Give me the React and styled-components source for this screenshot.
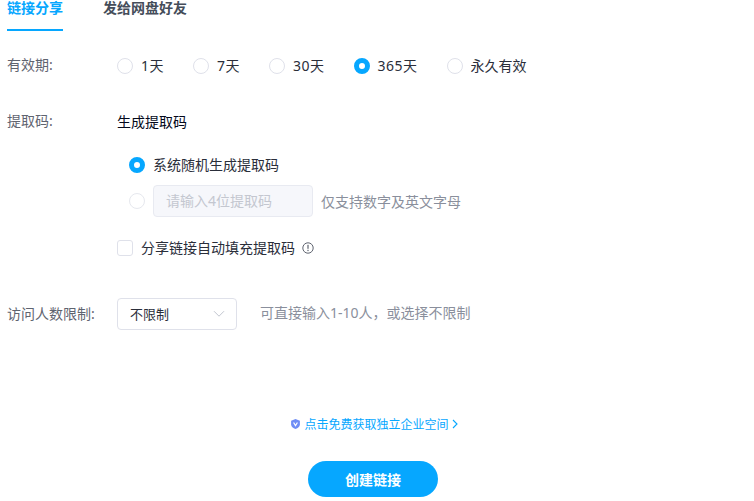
import React from 'react';
import styled, { createGlobalStyle } from 'styled-components';

const GlobalStyle = createGlobalStyle`
  html, body { margin: 0; padding: 0; background: #fff; }
  body { font-family: "Noto Sans", "Noto Sans CJK SC", sans-serif; }
`;

const durations = [
  { label: '1天', numeric: true },
  { label: '7天', numeric: true },
  { label: '30天', numeric: true },
  { label: '365天', numeric: true, checked: true },
  { label: '永久有效' },
];

const limitHint = '可直接输入1-10人\uFF0C或选择不限制';

function App() {
  return (
    <Page>
      <GlobalStyle />
      <Tabs>
        <Tab $active>链接分享</Tab>
        <Tab>发给网盘好友</Tab>
      </Tabs>

      <Row>
        <Label>有效期:</Label>
        <Options>
          {durations.map((d) => (
            <Option key={d.label}>
              <Radio $checked={d.checked} />
              <OptionText $numeric={d.numeric}>{d.label}</OptionText>
            </Option>
          ))}
        </Options>
      </Row>

      <CodeSection>
        <CodeHeader>
          <Label>提取码:</Label>
          <CodeTitle>生成提取码</CodeTitle>
        </CodeHeader>
        <CodeChoice>
          <Radio $checked />
          <OptionText>系统随机生成提取码</OptionText>
        </CodeChoice>
        <CodeInputRow>
          <Radio $disabled />
          <CodeInput>请输入4位提取码</CodeInput>
          <Hint>仅支持数字及英文字母</Hint>
        </CodeInputRow>
        <AutoFill>
          <Checkbox />
          <OptionText>分享链接自动填充提取码</OptionText>
          <InfoIcon viewBox="0 0 12 12">
            <circle cx="6" cy="6" r="5.2" fill="none" stroke="#5f6470" strokeWidth="1" />
            <rect x="5.4" y="2.8" width="1.2" height="4" fill="#5f6470" />
            <rect x="5.4" y="7.8" width="1.2" height="1.3" fill="#5f6470" />
          </InfoIcon>
        </AutoFill>
      </CodeSection>

      <LimitRow>
        <Label>访问人数限制:</Label>
        <Select>
          <SelectValue>不限制</SelectValue>
          <Chevron viewBox="0 0 12 8">
            <path d="M1 1.2 6 6.2 11 1.2" fill="none" stroke="#c2c6d0" strokeWidth="1" />
          </Chevron>
        </Select>
        <LimitHint>{limitHint}</LimitHint>
      </LimitRow>

      <Footer>
        <Promo>
          <ShieldIcon viewBox="0 0 12 12">
            <path d="M6 .6 10.8 2.4V6.2C10.8 8.8 8.6 10.6 6 11.5 3.4 10.6 1.2 8.8 1.2 6.2V2.4Z" fill="#6f8df5" />
            <path d="M3.9 4.3 6 7.8 8.1 4.3" fill="none" stroke="#fff" strokeWidth="1.3" />
          </ShieldIcon>
          <span>点击免费获取独立企业空间</span>
          <PromoArrow viewBox="0 0 6 10">
            <path d="M1 1 5 5 1 9" fill="none" stroke="#06a7ff" strokeWidth="1.1" />
          </PromoArrow>
        </Promo>
        <CreateButton>创建链接</CreateButton>
      </Footer>
    </Page>
  );
}

const Page = styled.div`
  width: 754px;
  height: 501px;
  overflow: hidden;
  padding: 0 7px;
  box-sizing: border-box;
  font-size: 14px;
  color: #03081a;
`;

const Tabs = styled.div`
  display: flex;
  gap: 40px;
  height: 31px;
`;

const Tab = styled.div`
  height: 31px;
  box-sizing: border-box;
  font-size: 14px;
  line-height: 15px;
  font-weight: 700;
  color: ${(p) => (p.$active ? '#06a7ff' : '#454d5a')};
  border-bottom: 2px solid ${(p) => (p.$active ? '#06a7ff' : 'transparent')};
`;

const Row = styled.div`
  display: flex;
  align-items: center;
  height: 20px;
  margin-top: 24px;
`;

const Label = styled.div`
  width: 110px;
  flex: none;
  font-size: 14px;
  line-height: 20px;
  color: #5f6470;
`;

const Options = styled.div`
  display: flex;
  align-items: center;
  gap: 29px;
  margin-top: 2px;
`;

const Option = styled.div`
  display: flex;
  align-items: center;
  gap: 8px;
`;

const Radio = styled.span`
  display: block;
  flex: none;
  width: 16px;
  height: 16px;
  box-sizing: border-box;
  border-radius: 50%;
  border: ${(p) => (p.$checked ? '5px solid #06a7ff' : `1px solid ${p.$disabled ? '#e6e8ee' : '#dfe1ea'}`)};
  background: #fff;
`;

const OptionText = styled.span`
  font-size: 14px;
  line-height: 20px;
  letter-spacing: ${(p) => (p.$numeric ? '0.5px' : '0')};
  color: #2a2e3a;
`;

const CodeSection = styled.div`
  margin-top: 36px;
`;

const CodeHeader = styled.div`
  display: flex;
  align-items: center;
  height: 20px;
`;

const CodeTitle = styled.div`
  margin-top: 2px;
  font-size: 14px;
  line-height: 20px;
  color: #03081a;
`;

const CodeChoice = styled.div`
  display: flex;
  align-items: center;
  gap: 8px;
  height: 20px;
  margin: 24px 0 0 122px;
`;

const CodeInputRow = styled.div`
  display: flex;
  align-items: center;
  height: 32px;
  margin: 10px 0 0 122px;
`;

const CodeInput = styled.div`
  width: 160px;
  height: 32px;
  box-sizing: border-box;
  margin-left: 8px;
  padding-left: 12px;
  border: 1px solid #e8eaf1;
  border-radius: 4px;
  background: #f6f7fb;
  color: #c4c7d0;
  font-size: 14px;
  line-height: 30px;
`;

const Hint = styled.span`
  margin-left: 8px;
  font-size: 14px;
  color: #8a8f9c;
`;

const AutoFill = styled.div`
  display: flex;
  align-items: center;
  gap: 8px;
  height: 20px;
  margin: 21px 0 0 110px;
`;

const Checkbox = styled.span`
  display: block;
  width: 16px;
  height: 16px;
  box-sizing: border-box;
  border: 1px solid #dfe1ea;
  border-radius: 3px;
`;

const InfoIcon = styled.svg`
  width: 12px;
  height: 12px;
  flex: none;
  margin-left: -1px;
`;

const LimitRow = styled.div`
  display: flex;
  align-items: center;
  height: 32px;
  margin-top: 40px;
`;

const Select = styled.div`
  display: flex;
  align-items: center;
  justify-content: space-between;
  width: 120px;
  height: 32px;
  box-sizing: border-box;
  padding: 0 11px 0 12px;
  border: 1px solid #dfe1ea;
  border-radius: 4px;
  font-size: 13px;
  color: #2a2e3a;
`;

const SelectValue = styled.span`
  margin-bottom: 2px;
`;

const Chevron = styled.svg`
  width: 12px;
  height: 8px;
`;

const LimitHint = styled.span`
  margin: 0 0 4px 23px;
  font-size: 14px;
  color: #8a8f9c;
`;

const Footer = styled.div`
  display: flex;
  flex-direction: column;
  align-items: center;
  margin-top: 84px;
  padding-right: 8px;
`;

const Promo = styled.div`
  display: flex;
  align-items: center;
  gap: 3px;
  height: 20px;
  margin-left: 2px;
  font-size: 12px;
  color: #06a7ff;
`;

const ShieldIcon = styled.svg`
  width: 11px;
  height: 12px;
`;

const PromoArrow = styled.svg`
  width: 6px;
  height: 10px;
`;

const CreateButton = styled.button`
  width: 130px;
  height: 36px;
  margin-top: 27px;
  border: none;
  border-radius: 18px;
  background: #06a7ff;
  color: #fff;
  font-family: inherit;
  font-size: 14px;
  font-weight: 700;
`;

export default App;
